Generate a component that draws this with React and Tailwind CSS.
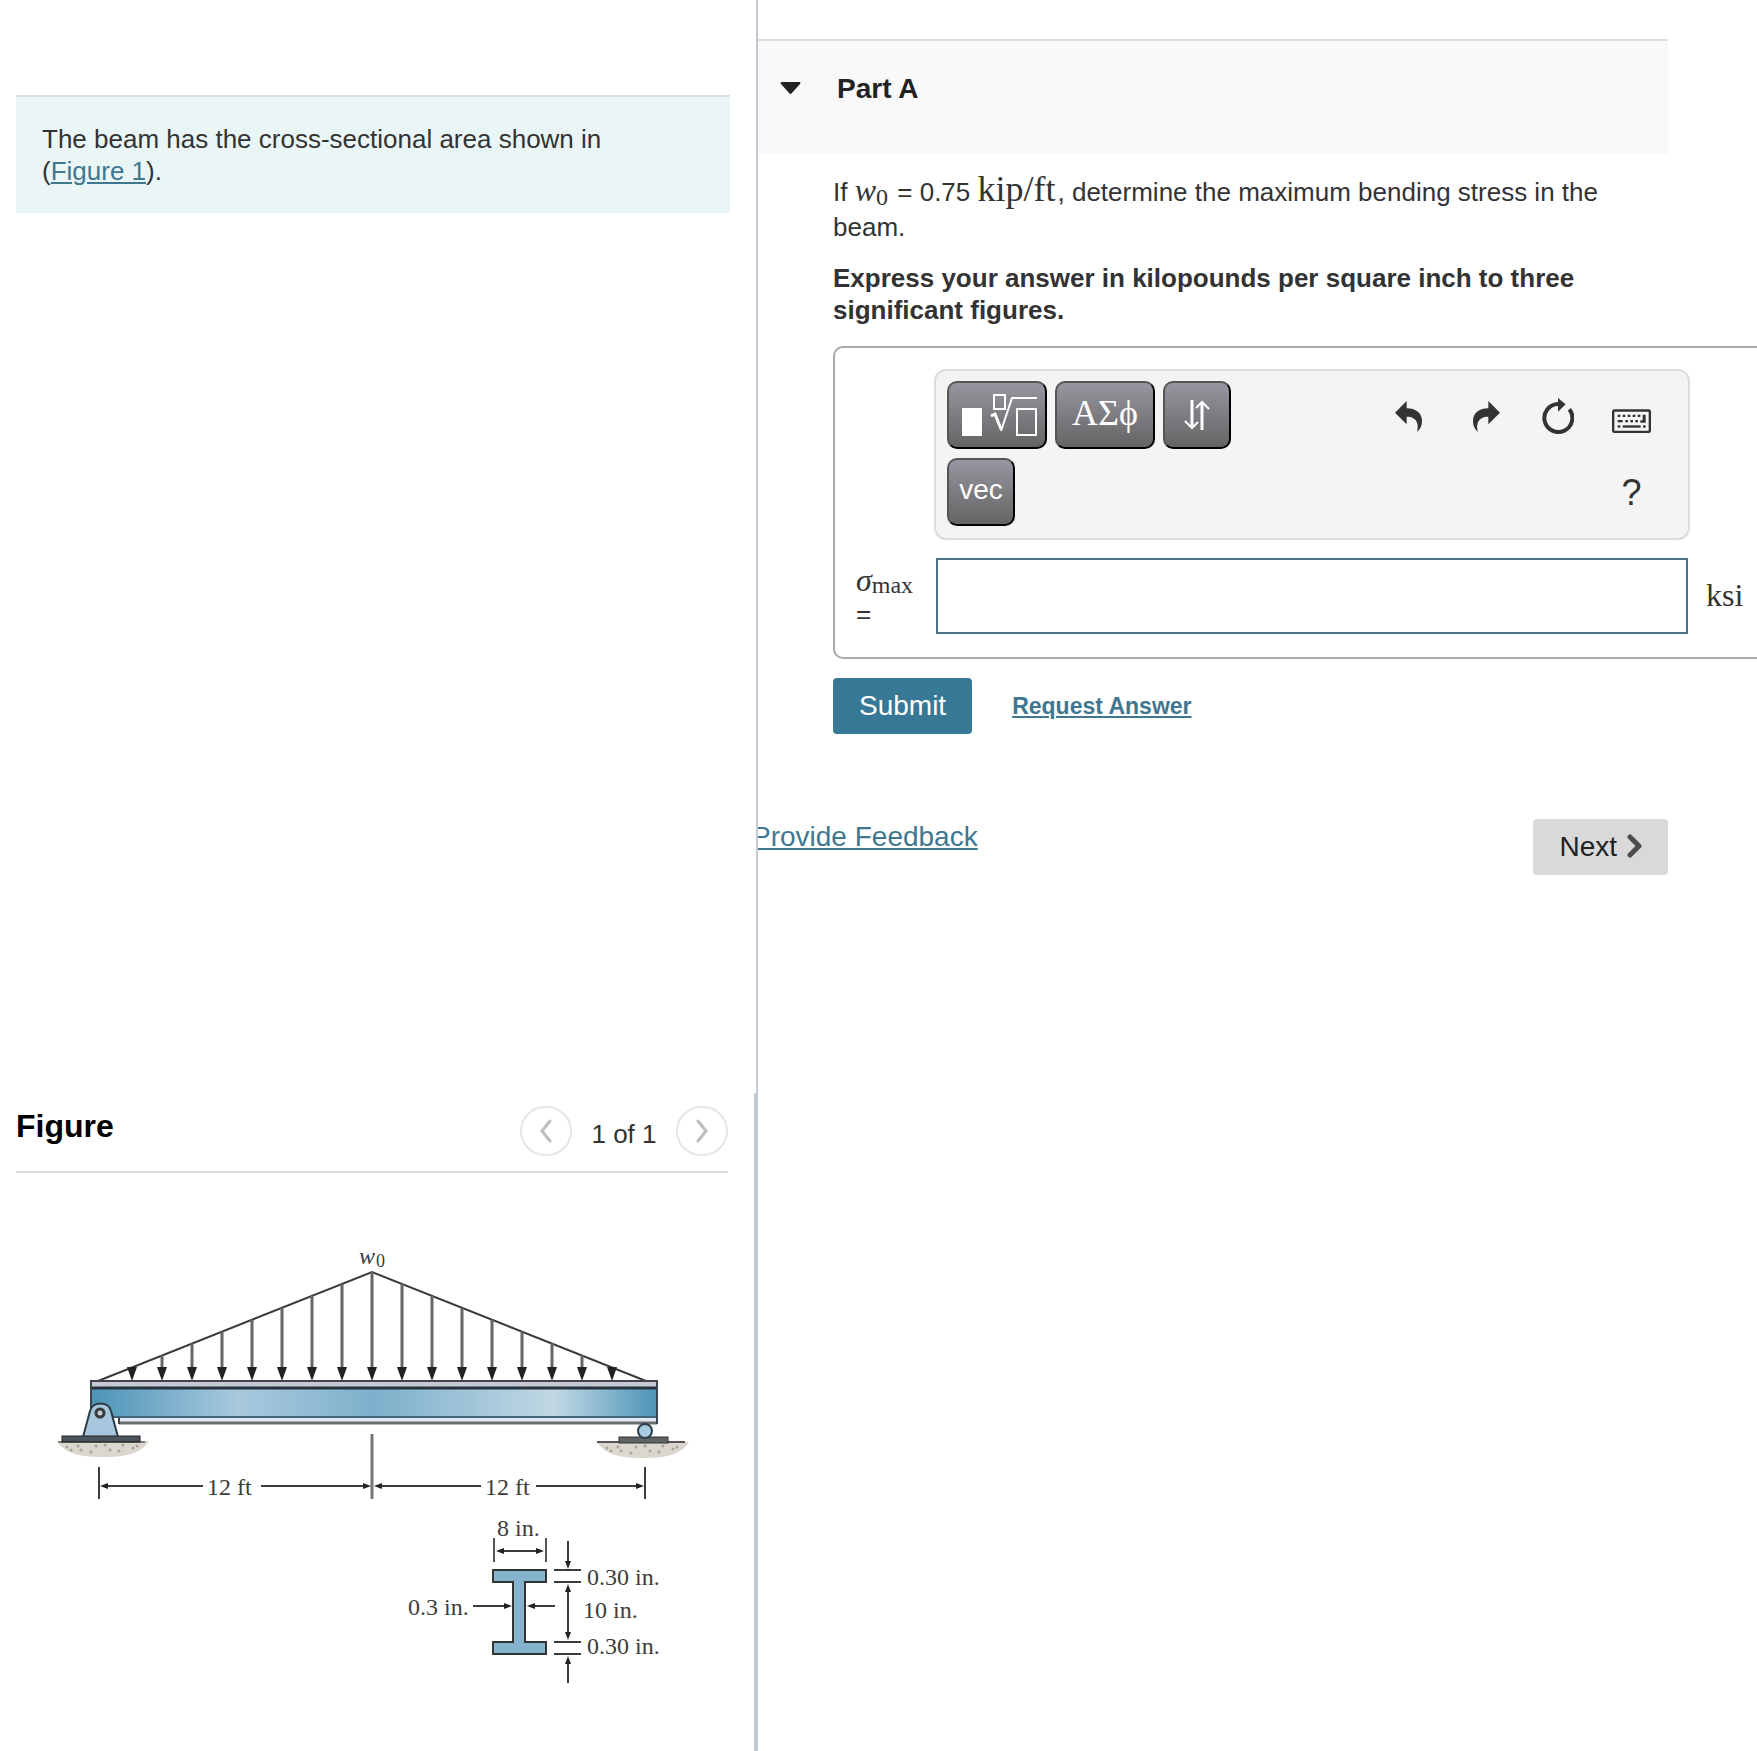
import { useState } from 'react';

const INK = '#3c3c3c';

const keyButton =
  'h-[68px] rounded-[10px] border-2 border-t-[#555] border-l-[#555] border-r-black border-b-black bg-linear-to-b from-[#98969f] to-[#646465] text-white flex items-center justify-center';

const UndoIcon = () => (
  <svg viewBox="0 0 81 93" className="w-[27px] h-[31px]" fill="#333">
    <path d="M0 35 35 0V22C66 23 81 38 81 60 81 76 74 86 66 93 72 72 68 47 35 47V70Z" />
  </svg>
);

const RedoIcon = () => (
  <svg viewBox="0 0 81 93" className="w-[27px] h-[31px]" fill="#333">
    <path d="M81 35 46 0V22C15 23 0 38 0 60 0 76 7 86 15 93 9 72 13 47 46 47V70Z" />
  </svg>
);

const ResetIcon = () => (
  <svg viewBox="0 0 96 108" className="w-[32px] h-[36px]">
    <path d="M48 18A42 42 0 1 0 82 34" fill="none" stroke="#333" strokeWidth="12" />
    <path d="M48 0 71 19 48 41Z" fill="#333" />
  </svg>
);

const KeyboardIcon = () => (
  <svg viewBox="0 0 117 102" className="w-[39px] h-[34px]" fill="#333">
    <rect x="3.5" y="34.5" width="110" height="64" rx="4" fill="none" stroke="#333" strokeWidth="7" />
    {[17, 32, 47, 62, 77].map((x) => (
      <rect key={x} x={x} y="47" width="8" height="7" />
    ))}
    <path d="M92 47H101V71H85V64H92Z" />
    <rect x="17" y="63" width="15" height="7" />
    {[40, 55, 70].map((x) => (
      <rect key={x} x={x} y="63" width="8" height="7" />
    ))}
    <rect x="17" y="79" width="8" height="7" />
    <rect x="32" y="79" width="54" height="7" />
    <rect x="93" y="79" width="8" height="7" />
  </svg>
);

const RootIcon = () => (
  <svg viewBox="0 0 76 44" className="w-[76px] h-[44px]" fill="none" stroke="#fff">
    <rect x="1" y="15" width="20" height="28" fill="#fff" stroke="none" />
    <rect x="33" y="2" width="11" height="14" strokeWidth="2" />
    <path d="M30 23 34 21 40 36" strokeWidth="3" />
    <path d="M40 38 51 5H76" strokeWidth="2" />
    <rect x="56" y="16" width="19" height="26" strokeWidth="2" />
  </svg>
);

const ArrowsIcon = () => (
  <svg viewBox="0 0 26 30" className="w-[26px] h-[30px]" fill="none" stroke="#fff">
    <path d="M8 0V27M18 30V3" strokeWidth="3" />
    <path d="M1 21 8 28 14 22M12 8 18 2 25 9" strokeWidth="2" />
  </svg>
);

// Line with a small filled head at its end point, horizontal or vertical
const Arrow = ({ x1, y1, x2, y2 }) => {
  const dx = Math.sign(x2 - x1);
  const dy = Math.sign(y2 - y1);
  const bx = x2 - dx * 8;
  const by = y2 - dy * 8;
  return (
    <g>
      <path d={`M${x1} ${y1}L${bx} ${by}`} stroke={INK} strokeWidth="2" />
      <path
        d={`M${x2} ${y2}L${bx + dy * 3} ${by + dx * 3}L${bx - dy * 3} ${by - dx * 3}Z`}
        fill="#222"
      />
    </g>
  );
};

const Ground = ({ x, y }) => (
  <g>
    <path d={`M${x} ${y}H${x + 92}C${x + 84} ${y + 12} ${x + 72} ${y + 16} ${x + 46} ${y + 16}S${x + 8} ${y + 12} ${x} ${y}Z`} fill="#dcd7ce" />
    {[[10, 6], [14, 9], [21, 5], [24, 9], [34, 11], [39, 5], [48, 4], [53, 9], [62, 10], [66, 4], [76, 7], [80, 5]].map(([dx, dy]) => (
      <circle key={dx} cx={x + dx} cy={y + dy} r="1.5" fill="#aaa59c" />
    ))}
  </g>
);

const BeamFigure = () => {
  const loads = [-8, -7, -6, -5, -4, -3, -2, -1, 0, 1, 2, 3, 4, 5, 6, 7, 8];
  return (
    <svg
      viewBox="0 0 712 578"
      className="block w-full"
      fontFamily="'Liberation Serif', serif"
      fontSize="24"
      fill={INK}
      role="img"
      aria-label="Beam with triangular load and its cross section"
    >
      <defs>
        <linearGradient id="web">
          <stop offset="0" stopColor="#4c94b7" />
          <stop offset="0.26" stopColor="#a9c9de" />
          <stop offset="0.5" stopColor="#7db0cb" />
          <stop offset="0.82" stopColor="#c1d8e5" />
          <stop offset="1" stopColor="#4c94b7" />
        </linearGradient>
      </defs>

      {/* distributed load */}
      <text x="343" y="91" fontStyle="italic">w</text>
      <text x="360" y="94" fontSize="18">0</text>
      <path d="M82 208 356 99 630 208" fill="none" stroke={INK} strokeWidth="2" />
      {loads.map((k) => {
        const x = 356 + k * 30;
        const top = 99 + Math.abs(k) * 11.9;
        return (
          <g key={k}>
            <path d={`M${x} ${top}V200`} stroke="#666" strokeWidth="3" />
            <path d={`M${x - 5} 194H${x + 5}L${x} 208Z`} fill="#222" />
          </g>
        );
      })}

      {/* beam */}
      <rect x="75" y="216" width="566" height="28" fill="url(#web)" />
      <rect x="75" y="208" width="566" height="7" fill="#c3cad4" />
      <path d="M74 208H641" stroke="#444" strokeWidth="2" />
      <path d="M75 215H641" stroke="#26333f" strokeWidth="3" />
      <rect x="103" y="244" width="538" height="6" fill="#e3e9f3" />
      <path d="M95 244H641" stroke="#45647a" strokeWidth="2" />
      <path d="M103 250H641" stroke="#6b6d72" strokeWidth="3" />
      <path d="M75 207V236M103 244V251M641 207V251" stroke="#3c444c" strokeWidth="2" />

      {/* pin support */}
      <Ground x={41} y={268} />
      <path d="M67 264 74 238C76 228 93 228 95 238L102 264Z" fill="#a5c6dd" stroke="#2e3a44" strokeWidth="2" />
      <circle cx="84" cy="240" r="4" fill="#c9ccd2" stroke="#3a3a3f" strokeWidth="3" />
      <rect x="46" y="263" width="78" height="6" fill="#4b555f" stroke="#222" strokeWidth="1" />
      <path d="M42 269H129" stroke="#222" strokeWidth="1" />

      {/* roller support */}
      <Ground x={581} y={269} />
      <path d="M581 269H669" stroke="#555" strokeWidth="2" />
      <rect x="603" y="264" width="49" height="6" fill="#5f6267" stroke="#333" strokeWidth="1" />
      <circle cx="629" cy="258" r="7" fill="#a9cbe0" stroke="#2f3e49" strokeWidth="2" />

      {/* span dimensions */}
      <path d="M83 294V326M629 294V326" stroke={INK} strokeWidth="2" />
      <path d="M356 261V326" stroke="#777" strokeWidth="3" />
      <Arrow x1={187} y1={313} x2={84} y2={313} />
      <Arrow x1={245} y1={313} x2={355} y2={313} />
      <Arrow x1={465} y1={313} x2={358} y2={313} />
      <Arrow x1={520} y1={313} x2={628} y2={313} />
      <text x="191" y="322">12 ft</text>
      <text x="469" y="322">12 ft</text>

      {/* cross section */}
      <path d="M477 397H530V409H509V469H530V481H477V469H497V409H477Z" fill="#84b3ce" stroke="#333" strokeWidth="2" />
      <path d="M478 365V389M530 365V389" stroke="#555" strokeWidth="2" />
      <Arrow x1={504} y1={378} x2={480} y2={378} />
      <Arrow x1={504} y1={378} x2={528} y2={378} />
      <Arrow x1={457} y1={433} x2={496} y2={433} />
      <Arrow x1={539} y1={433} x2={511} y2={433} />
      <path d="M538 397H565M538 409H565M538 469H565M538 481H565" stroke={INK} strokeWidth="2" />
      <Arrow x1={552} y1={368} x2={552} y2={396} />
      <Arrow x1={552} y1={439} x2={552} y2={411} />
      <Arrow x1={552} y1={439} x2={552} y2={467} />
      <Arrow x1={552} y1={510} x2={552} y2={483} />
      <text x="481" y="363">8 in.</text>
      <text x="392" y="442">0.3 in.</text>
      <text x="571" y="412">0.30 in.</text>
      <text x="567" y="445">10 in.</text>
      <text x="571" y="481">0.30 in.</text>
    </svg>
  );
};

const PagerButton = ({ label, d }) => (
  <button
    aria-label={label}
    className="w-[52px] h-[50px] rounded-full border-2 border-[#e6e6e6] flex items-center justify-center"
  >
    <svg viewBox="0 0 14 24" className="w-[14px] h-[24px]" fill="none" stroke="#bdbdbd" strokeWidth="3" strokeLinecap="round">
      <path d={d} />
    </svg>
  </button>
);

const FigurePanel = () => (
  <section className="border-r-4 border-[#c3cad6] pl-4 pr-[26px]">
    <div className="flex items-start justify-between h-20 pt-[13px] border-b-2 border-[#dcdcdc]">
      <h2 className="text-[32px] leading-10 font-bold text-black">Figure</h2>
      <div className="flex items-start">
        <PagerButton label="Previous figure" d="M11 2 3 12 11 22" />
        <span className="w-[104px] text-center leading-14">1 of 1</span>
        <PagerButton label="Next figure" d="M3 2 11 12 3 22" />
      </div>
    </div>
    <BeamFigure />
  </section>
);

const AnswerBox = () => {
  const [answer, setAnswer] = useState('');

  return (
    <div className="mt-5 -mr-[120px] grid grid-cols-[99px_1fr_96px] border-2 border-[#a9a9a9] rounded-[10px] pt-[21px] pb-[23px]">
      <div className="col-start-2 flex justify-between border-2 border-[#dcdcdc] rounded-xl bg-[#f4f4f4] pt-2.5 pb-3 pl-[11px] pr-[19px]">
        <div className="grid gap-[9px]">
          <div className="flex gap-2">
            <button aria-label="Templates" className={`${keyButton} w-[100px] pl-1`}>
              <RootIcon />
            </button>
            <button className={`${keyButton} w-[100px] pb-1 font-['Liberation_Serif',serif] text-[36px]`}>ΑΣϕ</button>
            <button aria-label="Subscript and superscript" className={`${keyButton} w-[68px]`}>
              <ArrowsIcon />
            </button>
          </div>
          <button className={`${keyButton} w-[68px] pb-1 text-[28px]`}>vec</button>
        </div>
        <div className="grid grid-cols-[84px_72px_72px_75px] gap-y-[9px] justify-items-center items-center">
          <button aria-label="Undo"><UndoIcon /></button>
          <button aria-label="Redo"><RedoIcon /></button>
          <button aria-label="Reset"><ResetIcon /></button>
          <button aria-label="Keyboard shortcuts"><KeyboardIcon /></button>
          <button aria-label="Help" className="col-start-4 text-[36px]">?</button>
        </div>
      </div>

      <label htmlFor="answer" className="col-start-1 mt-6 pl-[21px] leading-8">
        <span className="font-['Liberation_Serif',serif] leading-none">
          <i className="text-[32px]">σ</i>
          <sub className="text-[24px] bottom-[-2px]">max</sub>
        </span>
        <br />=
      </label>
      <input
        id="answer"
        value={answer}
        onChange={(e) => setAnswer(e.target.value)}
        className="mt-[18px] mx-0.5 h-[76px] min-w-0 border-2 border-[#4a7486] bg-white px-3 outline-none"
      />
      <span className="mt-4 pl-4 self-center font-['Liberation_Serif',serif] text-[32px]">ksi</span>
    </div>
  );
};

const App = () => {
  return (
    <main className="grid grid-cols-[758fr_999fr] min-h-screen bg-white font-['Liberation_Sans',Arial,sans-serif] text-[26px] leading-8 text-[#333]">
      <div className="flex flex-col min-w-0">
        <div className="flex-1 border-r-2 border-[#c3cad6] pt-[95px] pl-4 pr-[26px]">
          <div className="border-t-2 border-[#d8e0e0] bg-[#eaf6f6] p-[26px]">
            The beam has the cross-sectional area shown in{' '}
            <span className="whitespace-nowrap">
              (<a href="#figure" className="text-[#3f7791] underline">Figure 1</a>).
            </span>
          </div>
        </div>
        <FigurePanel />
      </div>

      <div className="min-w-0 overflow-hidden pt-[39px] pr-[89px]">
        <button className="flex items-start w-full h-[115px] border-t-2 border-[#dcdcdc] bg-[#f9f9f9] pt-8 pl-[22px] text-left">
          <span className="flex items-center gap-9 text-[28px] leading-8 font-bold text-[#222]">
            <svg viewBox="0 0 21 14" className="w-[21px] h-[14px]" fill="#222">
              <path d="M1 0H20Q21 1 20 2L11.5 11.5Q10.5 12.3 9.5 11.5L1 2Q0 1 1 0Z" />
            </svg>
            Part A
          </span>
        </button>

        <div className="pl-[75px] pt-[17px]">
          <p className="leading-[35px]">
            If{' '}
            <span className="font-['Liberation_Serif',serif] leading-none pr-0.5">
              <i className="text-[32px]">w</i>
              <sub className="text-[24px] bottom-[-4px]">0</sub>
            </span>{' '}
            = 0.75 <span className="pr-0.5 font-['Liberation_Serif',serif] text-[36px] leading-none">kip/ft</span>, determine the
            maximum bending stress in the beam.
          </p>
          <p className="mt-[17px] font-bold">
            Express your answer in kilopounds per square inch to three significant figures.
          </p>

          <AnswerBox />

          <div className="mt-[19px] flex items-center gap-10">
            <button className="h-14 px-[26px] rounded-sm bg-[#367896] text-[28px] text-white">Submit</button>
            <a href="#request" className="text-[23px] font-bold text-[#3f7791] underline">Request Answer</a>
          </div>
        </div>

        <div className="mt-[85px] flex items-start justify-between">
          <a href="#feedback" className="-ml-1.5 text-[28px] leading-9 text-[#3f7791] underline">Provide Feedback</a>
          <button className="flex items-center gap-2.5 h-14 px-[26px] rounded-sm bg-[#d9d9d9] text-[28px] text-[#222]">
            Next
            <svg viewBox="0 0 15 28" className="w-[15px] h-[28px]" fill="none" stroke="#4d4d4d" strokeWidth="5" strokeLinecap="round" strokeLinejoin="round">
              <path d="M3 4 12 13 3 22" />
            </svg>
          </button>
        </div>
      </div>
    </main>
  );
};

export default App;
